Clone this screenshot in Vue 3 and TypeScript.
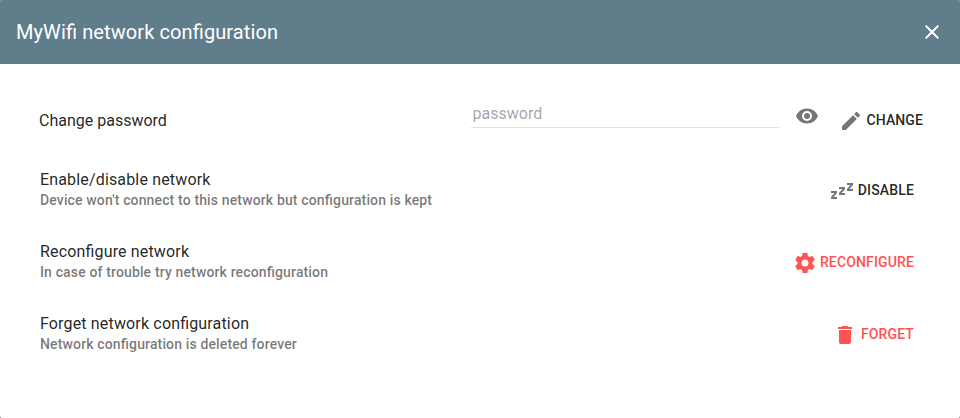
<script setup lang="ts">
import { ref } from 'vue'

interface Action {
  title: string
  subtitle: string
  label: string
  icon: string
  kind: string
}

const password = ref('')
const visible = ref(false)

const closeIcon =
  'M19,6.41L17.59,5L12,10.59L6.41,5L5,6.41L10.59,12L5,17.59L6.41,19L12,13.41L17.59,19L19,17.59L13.41,12L19,6.41Z'
const eyeIcon =
  'M12,9A3,3 0 0,0 9,12A3,3 0 0,0 12,15A3,3 0 0,0 15,12A3,3 0 0,0 12,9M12,17A5,5 0 0,1 7,12A5,5 0 0,1 12,7A5,5 0 0,1 17,12A5,5 0 0,1 12,17M12,4.5C7,4.5 2.73,7.61 1,12C2.73,16.39 7,19.5 12,19.5C17,19.5 21.27,16.39 23,12C21.27,7.61 17,4.5 12,4.5Z'
const pencilIcon =
  'M20.71,7.04C21.1,6.65 21.1,6 20.71,5.63L18.37,3.29C18,2.9 17.35,2.9 16.96,3.29L15.12,5.12L18.87,8.87M3,17.25V21H6.75L17.81,9.93L14.06,6.18L3,17.25Z'

const actions: Action[] = [
  {
    title: 'Enable/disable network',
    subtitle: "Device won't connect to this network but configuration is kept",
    label: 'Disable',
    icon: 'M23,12H17V10L20.39,6H17V4H23V6L19.62,10H23V12M15,16H9V14L12.39,10H9V8H15V10L11.62,14H15V16M7,20H1V18L4.39,14H1V12H7V14L3.62,18H7V20Z',
    kind: 'sleep',
  },
  {
    title: 'Reconfigure network',
    subtitle: 'In case of trouble try network reconfiguration',
    label: 'Reconfigure',
    icon: 'M12,15.5A3.5,3.5 0 0,1 8.5,12A3.5,3.5 0 0,1 12,8.5A3.5,3.5 0 0,1 15.5,12A3.5,3.5 0 0,1 12,15.5M19.43,12.97C19.47,12.65 19.5,12.33 19.5,12C19.5,11.67 19.47,11.34 19.43,11L21.54,9.37C21.73,9.22 21.78,8.95 21.66,8.73L19.66,5.27C19.54,5.05 19.27,4.96 19.05,5.05L16.56,6.05C16.04,5.66 15.5,5.32 14.87,5.07L14.5,2.42C14.46,2.18 14.25,2 14,2H10C9.75,2 9.54,2.18 9.5,2.42L9.13,5.07C8.5,5.32 7.96,5.66 7.44,6.05L4.95,5.05C4.73,4.96 4.46,5.05 4.34,5.27L2.34,8.73C2.21,8.95 2.27,9.22 2.46,9.37L4.57,11C4.53,11.34 4.5,11.67 4.5,12C4.5,12.33 4.53,12.65 4.57,12.97L2.46,14.63C2.27,14.78 2.21,15.05 2.34,15.27L4.34,18.73C4.46,18.95 4.73,19.03 4.95,18.95L7.44,17.94C7.96,18.34 8.5,18.68 9.13,18.93L9.5,21.58C9.54,21.82 9.75,22 10,22H14C14.25,22 14.46,21.82 14.5,21.58L14.87,18.93C15.5,18.67 16.04,18.34 16.56,17.94L19.05,18.95C19.27,19.03 19.54,18.95 19.66,18.73L21.66,15.27C21.78,15.05 21.73,14.78 21.54,14.63L19.43,12.97Z',
    kind: 'accent',
  },
  {
    title: 'Forget network configuration',
    subtitle: 'Network configuration is deleted forever',
    label: 'Forget',
    icon: 'M19,4H15.5L14.5,3H9.5L8.5,4H5V6H19M6,19A2,2 0 0,0 8,21H16A2,2 0 0,0 18,19V7H6V19Z',
    kind: 'accent delete',
  },
]
</script>

<template>
  <section class="dialog">
    <header class="toolbar">
      <h2 class="heading">MyWifi network configuration</h2>
      <button class="icon-button" type="button">
        <svg class="icon" viewBox="0 0 24 24"><path :d="closeIcon" /></svg>
      </button>
    </header>
    <main class="list">
      <div class="row password-row">
        <h3 class="title">Change password</h3>
        <input
          v-model="password"
          class="field"
          :type="visible ? 'text' : 'password'"
          placeholder="password"
        />
        <button class="icon-button eye" type="button" @click="visible = !visible">
          <svg class="icon" viewBox="0 0 24 24"><path :d="eyeIcon" /></svg>
        </button>
        <button class="action change" type="button">
          <svg class="icon" viewBox="0 0 24 24"><path :d="pencilIcon" /></svg>
          <span class="label">Change</span>
        </button>
      </div>
      <div v-for="item in actions" :key="item.title" class="row">
        <div class="texts">
          <h3 class="title">{{ item.title }}</h3>
          <p class="subtitle">{{ item.subtitle }}</p>
        </div>
        <button class="action" :class="item.kind" type="button">
          <svg class="icon" viewBox="0 0 24 24"><path :d="item.icon" /></svg>
          <span class="label">{{ item.label }}</span>
        </button>
      </div>
    </main>
  </section>
</template>

<style>
body {
  background: #666;
}
</style>

<style scoped>
.dialog {
  height: 418px;
  overflow: hidden;
  border-radius: 2px;
  background: #fff;
  color: rgba(0, 0, 0, 0.87);
  font-family: Roboto, sans-serif;
  font-feature-settings: 'liga' 1;
}
.toolbar {
  display: flex;
  align-items: center;
  justify-content: space-between;
  box-sizing: border-box;
  height: 64px;
  padding: 0 16px;
  background: #607d8b;
  color: #fff;
}
.heading {
  margin: 0;
  font-size: 20px;
  font-weight: 400;
  letter-spacing: 0.1px;
}
.icon-button,
.action {
  display: flex;
  align-items: center;
  padding: 0;
  border: 0;
  background: none;
  color: inherit;
  font-family: inherit;
}
.icon {
  display: block;
  flex: none;
  width: 24px;
  height: 24px;
  fill: currentColor;
}
.list {
  padding: 20px 46px 0 40px;
}
.row {
  display: flex;
  align-items: center;
  justify-content: space-between;
  height: 72px;
}
.password-row {
  height: 70px;
  margin: 0 -9px 0 -1px;
}
.password-row .title {
  flex: 1;
  padding-top: 3px;
  letter-spacing: 0;
}
.title {
  margin: 0;
  font-size: 16px;
  font-weight: 400;
  letter-spacing: 0.16px;
  line-height: 20px;
}
.subtitle {
  margin: 0;
  color: rgba(0, 0, 0, 0.54);
  font-size: 14px;
  font-weight: 500;
  letter-spacing: 0.14px;
  line-height: 20px;
}
.field {
  box-sizing: border-box;
  width: 308px;
  height: 30px;
  margin: 0 16px 12px 0;
  padding: 2px 2px 0;
  border: 0;
  border-bottom: 1px solid rgba(0, 0, 0, 0.12);
  outline: 0;
  background: none;
  color: inherit;
  font: 400 16px Roboto, sans-serif;
}
.field::placeholder {
  color: rgba(0, 0, 0, 0.38);
  opacity: 1;
}
.eye {
  margin: 0 20px 6px 0;
  color: rgba(0, 0, 0, 0.54);
}
.action {
  gap: 3px;
}
.action .icon {
  margin-top: 2px;
  color: rgba(0, 0, 0, 0.54);
}
.change {
  gap: 4px;
  padding-top: 2px;
}
.delete {
  gap: 4px;
}
.label {
  font-size: 14px;
  font-weight: 500;
  letter-spacing: 0.14px;
  line-height: 20px;
  text-align: right;
  text-transform: uppercase;
}
.change .label {
  letter-spacing: 0.1px;
}
.sleep .label {
  min-width: 57px;
}
.accent,
.accent .icon {
  color: #ff5252;
}
</style>
